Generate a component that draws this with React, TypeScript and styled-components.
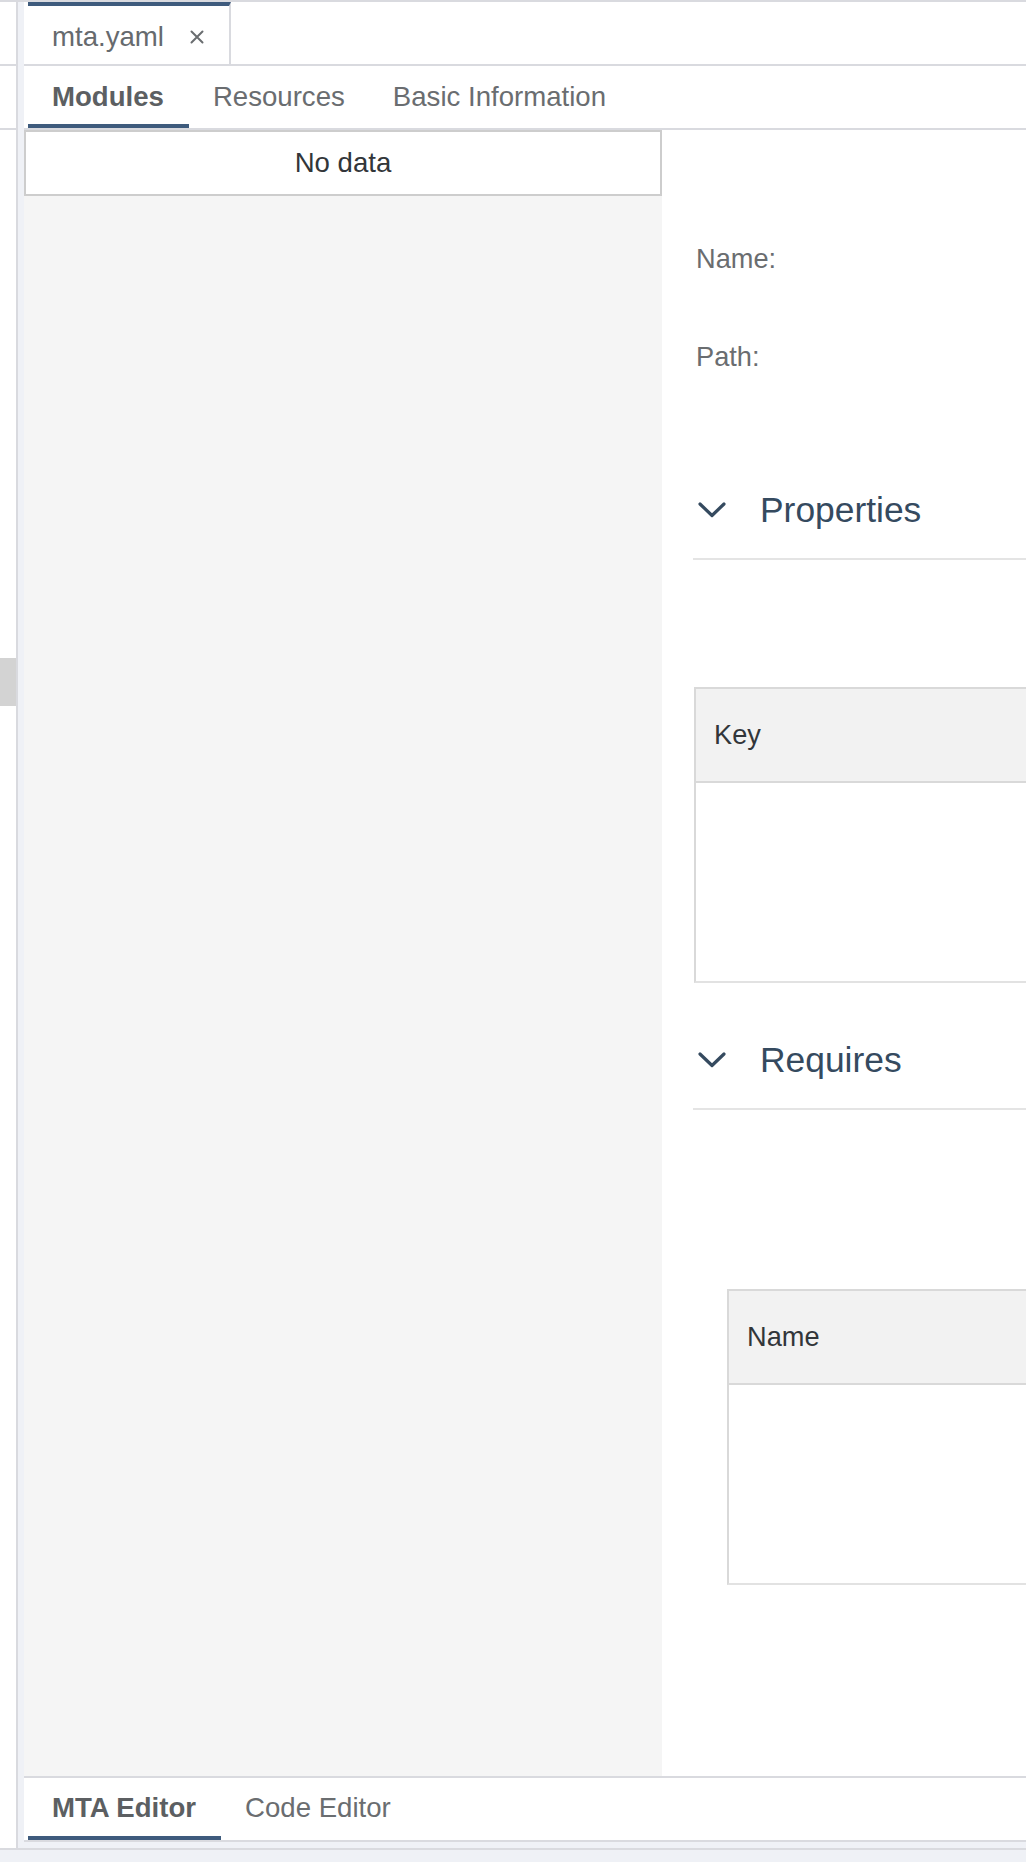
import React from "react";
import styled, { createGlobalStyle } from "styled-components";

const LINE = "#d9dadf";
const GUTTER = "#eff1f6";
const ACCENT = "#3e5b7d";
const HEAD = "#354a5f";
const FS = "27.6px";

const GlobalStyle = createGlobalStyle`
  html, body { margin: 0; padding: 0; background: #ffffff; }
  body { font-family: "Liberation Sans", Arial, sans-serif; }
  #root { width: 1026px; height: 1862px; overflow: hidden; }
  * { box-sizing: border-box; }
`;

const Page = styled.div`
  width: 1026px;
  height: 1862px;
  display: flex;
  flex-direction: column;
`;

const Workbench = styled.div`
  height: 1848px;
  display: flex;
  border-top: 2px solid ${LINE};
  flex: none;
`;

const SideColumn = styled.div`
  width: 16px;
  flex: none;
  background: #ffffff;
  display: flex;
  flex-direction: column;
`;

const SideRow = styled.div`
  height: 64px;
  flex: none;
  border-bottom: 2px solid ${LINE};
`;

const SashHandle = styled.div`
  margin-top: 528px;
  height: 48px;
  background: #d3d3d3;
`;

const Sash = styled.div`
  width: 2px;
  flex: none;
  background: ${LINE};
`;

const Gutter = styled.div`
  width: 6px;
  flex: none;
  background: ${GUTTER};
`;

const Editor = styled.div`
  flex: 1;
  min-width: 0;
  display: flex;
  flex-direction: column;
  background: ${GUTTER};
  padding-bottom: 6px;
`;

const FileTabStrip = styled.div`
  height: 64px;
  flex: none;
  display: flex;
  padding-left: 4px;
  background: #ffffff;
  border-bottom: 2px solid ${LINE};
`;

const FileTab = styled.div`
  width: 203px;
  display: flex;
  align-items: center;
  padding: 3px 0 0 24px;
  border-top: 4px solid ${ACCENT};
  border-right: 2px solid ${LINE};
  font-size: ${FS};
  line-height: 30px;
  color: #666a6e;
`;

const CloseIcon = styled.svg`
  margin-left: 26px;
  flex: none;
`;

const TabBar = styled.div<{ $top?: boolean }>`
  height: ${(p) => (p.$top ? "64px" : "66px")};
  flex: none;
  display: flex;
  padding-left: 4px;
  background: #ffffff;
  border-bottom: 2px solid ${LINE};
  border-top: ${(p) => (p.$top ? "none" : `2px solid ${LINE}`)};
`;

const TabItem = styled.div<{ $active?: boolean; $lift?: boolean }>`
  display: flex;
  align-items: center;
  padding: ${(p) => (p.$lift ? "1px" : "4px")} 24px 0 24px;
  font-size: ${FS};
  line-height: 30px;
  font-weight: ${(p) => (p.$active ? 700 : 400)};
  color: ${(p) => (p.$active ? "#5c5f62" : "#6a6d70")};
  border-bottom: 4px solid ${(p) => (p.$active ? ACCENT : "transparent")};
  &:first-child {
    padding-right: 25px;
  }
`;

const Content = styled.div`
  flex: 1;
  min-height: 0;
  display: flex;
  background: #ffffff;
`;

const ModuleList = styled.div`
  width: 638px;
  flex: none;
  background: #f5f5f5;
`;

const NoData = styled.div`
  height: 66px;
  border: 2px solid #cdcdcd;
  background: #ffffff;
  display: flex;
  align-items: center;
  justify-content: center;
  font-size: ${FS};
  line-height: 30px;
  color: #32363a;
`;

const DetailPanel = styled.div`
  flex: 1;
  min-width: 0;
  overflow: hidden;
  padding: 114px 0 0 31px;
  display: flex;
  flex-direction: column;
`;

const Form = styled.div`
  display: flex;
  flex-direction: column;
  gap: 68px;
`;

const FieldLabel = styled.div`
  font-size: 27.2px;
  line-height: 30px;
  color: #6a6d70;
  padding-left: 3px;
`;

const SectionHeader = styled.div<{ $gap: number }>`
  margin-top: ${(p) => p.$gap}px;
  width: 700px;
  display: flex;
  align-items: center;
  padding-bottom: 28px;
  border-bottom: 2px solid #e4e4e4;
`;

const Chevron = styled.svg`
  margin-left: 5px;
  flex: none;
`;

const SectionTitle = styled.div`
  margin-left: 34px;
  font-size: 35.4px;
  line-height: 40px;
  color: ${HEAD};
`;

const Table = styled.div<{ $gap: number; $indent: number }>`
  margin-top: ${(p) => p.$gap}px;
  margin-left: ${(p) => p.$indent}px;
  width: 700px;
  border-top: 2px solid #d9d9d9;
  border-left: 2px solid #d9d9d9;
  border-bottom: 2px solid #e2e2e2;
  flex: none;
`;

const TableHead = styled.div`
  height: 94px;
  background: #f2f2f2;
  border-bottom: 2px solid #d9d9d9;
  display: flex;
  align-items: center;
  padding-left: 18px;
  font-size: 27.2px;
  line-height: 30px;
  color: #32363a;
`;

const TableBody = styled.div`
  height: 198px;
  background: #ffffff;
`;

const StatusStrip = styled.div`
  height: 14px;
  flex: none;
  border-top: 2px solid ${LINE};
  background: ${GUTTER};
`;

const ChevronDown = () => (
  <Chevron width="28" height="16" viewBox="0 0 28 16">
    <polyline
      points="2,2 14,13.5 26,2"
      fill="none"
      stroke={HEAD}
      strokeWidth="3.2"
      strokeLinecap="round"
      strokeLinejoin="round"
    />
  </Chevron>
);

export default function App() {
  return (
    <>
      <GlobalStyle />
      <Page>
        <Workbench>
          <SideColumn>
            <SideRow />
            <SideRow />
            <SashHandle />
          </SideColumn>
          <Sash />
          <Gutter />
          <Editor>
            <FileTabStrip>
              <FileTab>
                mta.yaml
                <CloseIcon width="14" height="14" viewBox="0 0 14 14">
                  <path
                    d="M1.5 1.5 L12.5 12.5 M12.5 1.5 L1.5 12.5"
                    stroke="#6a6d70"
                    strokeWidth="2"
                    strokeLinecap="round"
                  />
                </CloseIcon>
              </FileTab>
            </FileTabStrip>
            <TabBar $top>
              <TabItem $active>Modules</TabItem>
              <TabItem>Resources</TabItem>
              <TabItem>Basic Information</TabItem>
            </TabBar>
            <Content>
              <ModuleList>
                <NoData>No data</NoData>
              </ModuleList>
              <DetailPanel>
                <Form>
                  <FieldLabel>Name:</FieldLabel>
                  <FieldLabel>Path:</FieldLabel>
                </Form>
                <SectionHeader $gap={118}>
                  <ChevronDown />
                  <SectionTitle>Properties</SectionTitle>
                </SectionHeader>
                <Table $gap={127} $indent={1}>
                  <TableHead>Key</TableHead>
                  <TableBody />
                </Table>
                <SectionHeader $gap={57}>
                  <ChevronDown />
                  <SectionTitle>Requires</SectionTitle>
                </SectionHeader>
                <Table $gap={179} $indent={34}>
                  <TableHead>Name</TableHead>
                  <TableBody />
                </Table>
              </DetailPanel>
            </Content>
            <TabBar>
              <TabItem $active $lift>MTA Editor</TabItem>
              <TabItem $lift>Code Editor</TabItem>
            </TabBar>
          </Editor>
        </Workbench>
        <StatusStrip />
      </Page>
    </>
  );
}
